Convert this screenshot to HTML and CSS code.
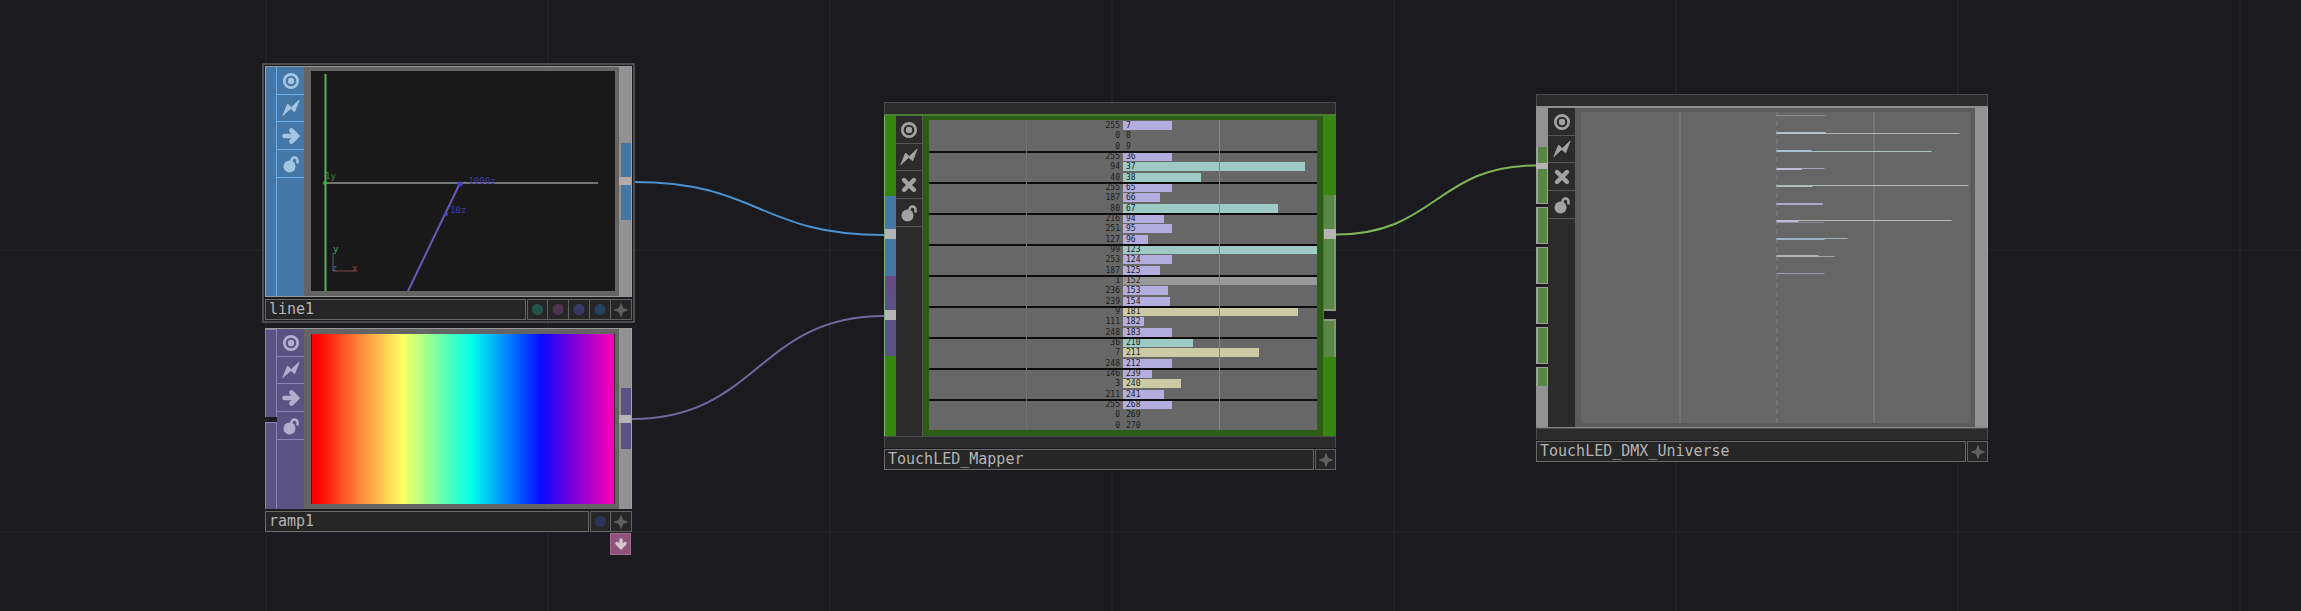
FILE: index.html
```html
<!DOCTYPE html>
<html lang="en">
<head>
<meta charset="utf-8">
<title>Network editor</title>
<link rel="stylesheet" href="styles.css">
</head>
<body>
<svg class="symbols" aria-hidden="true">
  <symbol id="view" viewBox="0 0 18 18"><circle cx="9" cy="9" r="6.7" fill="none" stroke="currentColor" stroke-width="2.7"/><circle cx="9" cy="9" r="3.2" fill="currentColor"/></symbol>
  <symbol id="bolt" viewBox="0 0 18 18"><path d="M.8 16.600 5.600 5l3.600 3.600L17.200 1 12.600 12.800 8.800 9.400Z" fill="currentColor" stroke="currentColor" stroke-width=".9"/></symbol>
  <symbol id="arrow" viewBox="0 0 18 18"><path d="M2.500 9H14M9.500 3.500 15 9l-5.500 5.500" fill="none" stroke="currentColor" stroke-width="4.600" stroke-linecap="round"/></symbol>
  <symbol id="cross" viewBox="0 0 18 18"><path d="m4 4 10 10m0-10-10 10" fill="none" stroke="currentColor" stroke-width="4.400" stroke-linecap="round"/></symbol>
  <symbol id="lock" viewBox="0 0 18 18"><circle cx="7.500" cy="11.500" r="6" fill="currentColor"/><path d="M9.500 7V5.500a3 3 0 0 1 6 0V8.500" fill="none" stroke="currentColor" stroke-width="2.600"/></symbol>
  <symbol id="plus" viewBox="0 0 14 14"><path d="M7 1.500 8.500 5.500 12.500 7 8.500 8.500 7 12.500 5.500 8.500 1.500 7 5.500 5.500Z" fill="currentColor" stroke="currentColor" stroke-width="1.500"/></symbol>
  <symbol id="down" viewBox="0 0 14 14"><path d="M7 3v7M3 6.500 7 10.500l4-4" fill="none" stroke="currentColor" stroke-width="3.400" stroke-linecap="round"/></symbol>
</svg>
<main class="canvas">
  <svg class="wires" aria-hidden="true">
    <path class="wire-blue" d="M634 182C759 182 759 235 884 235"/>
    <path class="wire-violet" d="M632 419C758 419 758 316 884 316"/>
    <path class="wire-green" d="M1336 234.500C1436 234.500 1436 165.500 1536 165.500"/>
  </svg>

  <section class="node line selected" aria-label="line1">
    <div class="body">
      <div class="input"></div>
      <div class="flags">
        <button aria-label="Viewer active"><svg><use href="#view"/></svg></button>
        <button aria-label="Cook"><svg><use href="#bolt"/></svg></button>
        <button aria-label="Bypass"><svg><use href="#arrow"/></svg></button>
        <button aria-label="Lock"><svg><use href="#lock"/></svg></button>
      </div>
      <div class="frame">
        <svg class="scene" viewBox="0 0 304 220">
          <path class="axis-x" d="M14 112H287"/>
          <path class="axis-y" d="M14.500 3V220"/>
          <path class="axis-z" d="M97 220 149 112"/>
          <circle class="dot-z" cx="149" cy="113" r="2.500"/><circle class="dot-z" cx="135" cy="143" r="2"/><circle class="dot-y" cx="14" cy="112" r="2"/>
          <path class="axis-mini" d="M22 182V200"/><path class="axis-red" d="M22 200H46"/>
          <text class="lab-y" x="14" y="108">1y</text>
          <text class="lab-z" x="152" y="113">-1000z</text>
          <text class="lab-z" x="139" y="142">10z</text>
          <text class="lab-g" x="22" y="181">y</text>
          <text class="lab-b" x="21" y="200">z</text>
          <text class="lab-r" x="41" y="200">x</text>
        </svg>
      </div>
      <div class="output"><i class="pad"></i><i class="slot"></i><i class="pad low"></i><b class="plug"></b></div>
    </div>
    <div class="title"><span class="name">line1</span>
      <button class="cell green" aria-label="Geometry material"></button><button class="cell pink" aria-label="Render"></button><button class="cell purple" aria-label="Display"></button><button class="cell blue" aria-label="Select"></button><button class="cell" aria-label="Add"><svg><use href="#plus"/></svg></button>
    </div>
  </section>

  <section class="node ramp" aria-label="ramp1">
    <div class="body">
      <div class="input"><i class="slot"></i><i class="slot"></i></div>
      <div class="flags">
        <button aria-label="Viewer active"><svg><use href="#view"/></svg></button>
        <button aria-label="Cook"><svg><use href="#bolt"/></svg></button>
        <button aria-label="Bypass"><svg><use href="#arrow"/></svg></button>
        <button aria-label="Lock"><svg><use href="#lock"/></svg></button>
      </div>
      <div class="frame"><div class="spectrum"></div></div>
      <div class="output"><i class="pad"></i><i class="slot"></i><i class="pad"></i><b class="plug"></b></div>
    </div>
    <div class="title"><span class="name">ramp1</span>
      <button class="cell blue" aria-label="Display"></button><button class="cell" aria-label="Add"><svg><use href="#plus"/></svg></button>
    </div>
    <button class="dock" aria-label="Docked operators"><svg><use href="#down"/></svg></button>
  </section>

  <section class="node comp mapper" aria-label="TouchLED_Mapper">
    <div class="cap"></div>
    <div class="body">
      <div class="input"><i class="own"></i><i class="top"></i><i class="chop"></i><i class="own"></i><b class="plug first"></b><b class="plug second"></b></div>
      <div class="flags">
        <button aria-label="Viewer active"><svg><use href="#view"/></svg></button>
        <button aria-label="Cook"><svg><use href="#bolt"/></svg></button>
        <button aria-label="Bypass"><svg><use href="#cross"/></svg></button>
        <button aria-label="Lock"><svg><use href="#lock"/></svg></button>
      </div>
      <div class="frame">
        <ol class="chart">
          <li><span>255</span><b style="width:25%">7</b></li>
          <li><span>0</span><b class="zero">8</b></li>
          <li><span>0</span><b class="zero">9</b></li>
          <li><span>255</span><b style="width:25%">36</b></li>
          <li><span>94</span><b class="t" style="width:94%">37</b></li>
          <li><span>40</span><b class="t" style="width:40%">38</b></li>
          <li><span>255</span><b style="width:25%">65</b></li>
          <li><span>187</span><b style="width:19%">66</b></li>
          <li><span>80</span><b class="t" style="width:80%">67</b></li>
          <li><span>216</span><b style="width:21%">94</b></li>
          <li><span>251</span><b style="width:25%">95</b></li>
          <li><span>127</span><b style="width:13%">96</b></li>
          <li><span>99</span><b class="t" style="width:100%">123</b></li>
          <li><span>253</span><b style="width:25%">124</b></li>
          <li><span>187</span><b style="width:19%">125</b></li>
          <li><span>1</span><b class="g" style="width:100%">152</b></li>
          <li><span>236</span><b style="width:23%">153</b></li>
          <li><span>239</span><b style="width:24%">154</b></li>
          <li><span>9</span><b class="y" style="width:90%">181</b></li>
          <li><span>111</span><b style="width:11%">182</b></li>
          <li><span>248</span><b style="width:25%">183</b></li>
          <li><span>36</span><b class="t" style="width:36%">210</b></li>
          <li><span>7</span><b class="y" style="width:70%">211</b></li>
          <li><span>248</span><b style="width:25%">212</b></li>
          <li><span>146</span><b style="width:15%">239</b></li>
          <li><span>3</span><b class="y" style="width:30%">240</b></li>
          <li><span>211</span><b style="width:21%">241</b></li>
          <li><span>255</span><b style="width:25%">268</b></li>
          <li><span>0</span><b class="zero">269</b></li>
          <li><span>0</span><b class="zero">270</b></li>
        </ol>
      </div>
      <div class="output"><i class="own"></i><i class="slot long"></i><i class="slot"></i><i class="own"></i><b class="plug first"></b></div>
    </div>
    <div class="cap"></div>
    <div class="title"><span class="name">TouchLED_Mapper</span><button class="cell" aria-label="Add"><svg><use href="#plus"/></svg></button></div>
  </section>

  <section class="node comp universe" aria-label="TouchLED_DMX_Universe">
    <div class="cap"></div>
    <div class="body">
      <div class="input"><i class="own"></i><i class="slot head"></i><i class="slot"></i><i class="slot"></i><i class="slot"></i><i class="slot"></i><i class="slot tail"></i><i class="own"></i><b class="plug"></b></div>
      <div class="flags">
        <button aria-label="Viewer active"><svg><use href="#view"/></svg></button>
        <button aria-label="Cook"><svg><use href="#bolt"/></svg></button>
        <button aria-label="Bypass"><svg><use href="#cross"/></svg></button>
        <button aria-label="Lock"><svg><use href="#lock"/></svg></button>
      </div>
      <div class="frame">
        <svg class="plot" viewBox="0 0 388 311">
          <path stroke="#858585" d="M98.500 0V311M292.500 0V311"/>
          <path stroke="#858585" stroke-dasharray="5 4" d="M195.500 0V311"/>
          <g class="thin"><path d="M195 3.500H244" stroke="#8c8c8c"/><path d="M195 21.500H378" stroke="#adb5b5"/><path d="M195 39.500H350" stroke="#a9c4bf"/><path d="M195 56.500H243" stroke="#a6a2b8"/><path d="M195 73.500H387" stroke="#b4b9b9"/><path d="M195 91.500H241" stroke="#aaa3bf"/><path d="M195 108.500H370" stroke="#bcbfb8"/><path d="M195 110.500H243" stroke="#8f8c9c"/><path d="M195 126.500H266" stroke="#a5b0b5"/><path d="M195 144.500H253" stroke="#a6a69e"/><path d="M195 161.500H243" stroke="#9d9baf"/></g>
          <g class="thick"><path d="M195 21H244" stroke="#b5c3cf"/><path d="M195 39H230" stroke="#a4c1d2"/><path d="M195 57H220" stroke="#c2bcd8"/><path d="M195 74H231" stroke="#b0bdbd"/><path d="M195 92H241" stroke="#b0a9c4"/><path d="M195 109H217" stroke="#c0bcd6"/><path d="M195 127H243" stroke="#9daec6"/><path d="M195 144H237" stroke="#b4b4ae"/></g>
        </svg>
      </div>
      <div class="output"></div>
    </div>
    <div class="cap"></div>
    <div class="title"><span class="name">TouchLED_DMX_Universe</span><button class="cell" aria-label="Add"><svg><use href="#plus"/></svg></button></div>
  </section>
</main>
</body>
</html>
```

FILE: styles.css
```css
* { box-sizing: border-box; }

body {
  margin: 0;
  background: #1b1b1f;
  font-family: "DejaVu Sans Mono", monospace;
}

button {
  display: grid;
  place-items: center;
  margin: 0;
  padding: 0;
  border: 0;
  background: none;
  color: inherit;
}

.symbols { position: absolute; width: 0; height: 0; }

.canvas {
  position: relative;
  min-height: 100vh;
  overflow: hidden;
  background:
    linear-gradient(90deg, #222226 2px, transparent 2px) 265px 0 / 282px 282px,
    linear-gradient(#202024 2px, transparent 2px) 0 249px / 282px 282px;
}

.wires { position: absolute; inset: 0; width: 100%; height: 100%; fill: none; stroke-width: 2; }
.wire-blue { stroke: #4a92d0; }
.wire-violet { stroke: #72669f; }
.wire-green { stroke: #7fb657; }

/* Operators placed on the network */
.node { position: absolute; width: 367px; }
.line { left: 265px; top: 66px; }
.ramp { left: 265px; top: 328px; }
.mapper { left: 884px; top: 102px; width: 452px; }
.universe { left: 1536px; top: 94px; width: 452px; }
.selected { outline: 2px solid #4c4c4c; outline-offset: 1px; background: #1b1b1f; }

.body { display: flex; border-top: 1px solid #999; }
.input, .output { position: relative; display: flex; flex-direction: column; flex: none; width: 12px; }
.output { width: 13px; background: #929292; border-right: 1px solid #a4a4a4; }
.flags { flex: none; width: 27px; }
.flags button { width: 100%; height: 28px; border-bottom: 1px solid var(--rule); color: var(--icon); }
.flags button:nth-child(2) { height: 27px; }
.flags svg { width: 18px; height: 18px; }
.frame { flex: 1; min-width: 0; background: #646464; }
.plug { position: absolute; left: 0; width: 100%; background: #b4b4b4; }

/* SOP and TOP families */
.line { --rule: #68b0f0; --icon: #a3c4e2; }
.line .input, .line .flags, .line .slot { background: #4476a6; }
.line .input { border-left: 1px solid #68b0f0; border-right: 1px solid #68b0f0; }
.line .body { height: 231px; border-bottom: 1px solid #999; }
.line .frame { padding: 4px 4px 5px 7px; }
.line .pad { height: 76px; }
.line .slot { height: 78px; margin-left: 2px; }
.line .plug { top: 110px; height: 8px; background: #b5aaa4; }

.ramp { --rule: #8d83b4; --icon: #b3aecd; }
.ramp .flags, .ramp .slot { background: #5a5282; }
.ramp .body { height: 181px; }
.ramp .input { gap: 5px; }
.ramp .input .slot { flex: 1; border-left: 1px solid #8d83b4; border-right: 1px solid #8d83b4; border-top: 1px solid #8d83b4; }
.ramp .frame { padding: 5px 4px 5px 7px; }
.ramp .pad { height: 59px; }
.ramp .output .slot { height: 61px; margin-left: 2px; }
.ramp .plug { top: 86px; height: 8px; }

/* Line viewer */
.scene { display: block; width: 100%; height: 100%; background: #191919; fill: none; font-size: 9px; }
.axis-x { stroke: #d0d0d0; }
.axis-y { stroke: #5fae5f; stroke-width: 2; }
.axis-z { stroke: #6b58b8; stroke-width: 2; }
.axis-mini { stroke: #496b70; }
.axis-red { stroke: #85404b; }
.dot-z { fill: #4540c8; }
.dot-y { fill: #3fae3f; }
.lab-y { fill: #3b8a3b; }
.lab-z { fill: #3f3bb0; }
.lab-g { fill: #4fa84f; }
.lab-b { fill: #3a5da0; }
.lab-r { fill: #94404a; }

.spectrum {
  height: 100%;
  border: solid #30252c;
  border-width: 0 1px;
  background: linear-gradient(90deg, #f00 2%, #ff8038 15%, #ffff64 30%, #80ffa0 41%, #00ffec 53%, #0080ff 65%, #0a0aff 76%, #8000d8 87%, #ff00b4);
}

/* Name bar */
.title { display: flex; height: 21px; margin-top: 2px; background: #1b1b1f; color: #b4b4b4; }
.name { flex: 1; padding-left: 3px; margin-right: 1px; border: 1px solid #6a6a6a; background: #262626; font-size: 15px; line-height: 19px; white-space: nowrap; }
.cell { width: 21px; border: 1px solid #626262; background: #262626; color: #606060; }
.cell + .cell { border-left: 0; }
.cell svg { width: 14px; height: 14px; }
.green, .pink, .purple, .blue { background: radial-gradient(circle, var(--dot) 5px, #262626 6px); }
.green { --dot: #23544b; }
.pink { --dot: #4e3550; }
.purple { --dot: #3c3868; }
.blue { --dot: #27405f; }
.ramp .blue { --dot: #2a3558; }
.dock { width: 21px; height: 22px; margin: 1px 1px 0 auto; border: 1px solid #a56a90; background: #8d537b; color: #d5c5d0; }
.dock svg { width: 14px; height: 14px; }

/* Component family */
.comp { --rule: #555; --icon: #a2a2a2; }
.cap { height: 12px; border: 1px solid #4c4c4c; border-bottom: 0; background: #2b2b2b; }
.comp .title { margin-top: 1px; }
.comp .flags { background: #2b2b2b; }

.mapper .body { height: 322px; border-top: 2px solid #4c7d32; }
.mapper .input { border-left: 1px solid #7fae7f; }
.mapper .flags { width: 26px; }
.mapper .frame { padding: 4px 6px 6px 6px; border-left: 1px solid #50604a; background: #2c5c16; }
.own { flex: 1; background: #368610; }
.top { height: 80px; background: #4476a6; }
.chop { height: 80px; background: linear-gradient(#66488a, #5a5282 24px); }
.mapper .plug { height: 10px; }
.mapper .first { top: 113px; }
.mapper .second { top: 194px; }
.mapper .output { border-left: 1px solid #368610; border-right: 0; background: #1b1b1f; }
.mapper .slot { height: 38px; border-top: 2px solid #8d9d83; border-right: 2px solid #7d9a6c; background: #5b8746; }
.mapper .long { height: 116px; margin-bottom: 8px; border-top: 0; border-bottom: 2px solid #8d9d83; }
.mapper .output .own:first-child { flex: 0 0 79px; }

.chart { position: relative; display: grid; grid-template-rows: repeat(30, 1fr); height: 100%; margin: 0; padding: 0; list-style: none; background: #676767; color: #1c1c1c; font-size: 8px; line-height: 10px; }
.chart::after { content: ""; position: absolute; inset: 0; background: linear-gradient(#858585, #858585) 75% 0 / 1px 100% no-repeat, linear-gradient(#717171, #717171) 25% 0 / 1px 100% no-repeat; }
.chart li { display: grid; grid-template-columns: 1fr 1fr; min-height: 0; padding-top: 1px; }
.chart li:nth-child(3n+4) { padding-top: 0; border-top: 2px solid #0c0c0c; line-height: 8px; }
.chart span { padding-right: 3px; text-align: right; }
.chart b { height: 9px; padding-left: 3px; background: #b4aedf; font-weight: normal; white-space: nowrap; }
.chart li:nth-child(3n+4) b { height: 8px; }
.chart .t { background: #9dcac5; }
.chart .g { background: #999; }
.chart .y { background: #cbcba5; }
.chart .zero { background: none; }

.universe .body { height: 322px; border-top: 2px solid #8e8e8e; border-bottom: 1px solid #858585; }
.universe .own { background: #929292; }
.universe .input .own { flex: 0 0 39px; }
.universe .input .own:last-of-type { flex: 1; }
.universe .input { background: #1b1b1f; }
.universe .slot { height: 37px; margin-bottom: 3px; border: 1px solid #a0a0a0; border-left-width: 2px; background: #5b8746; }
.universe .head { height: 57px; border-top: 0; }
.universe .tail { height: 19px; margin-bottom: 0; border-bottom: 0; }
.universe .plug { top: 55px; height: 6px; }
.universe .frame { padding: 4px 5px 4px 6px; background: #5c5c5c; }
.plot { display: block; width: 100%; height: 100%; background: #666; fill: none; }
.thick { stroke-width: 2; }
```
